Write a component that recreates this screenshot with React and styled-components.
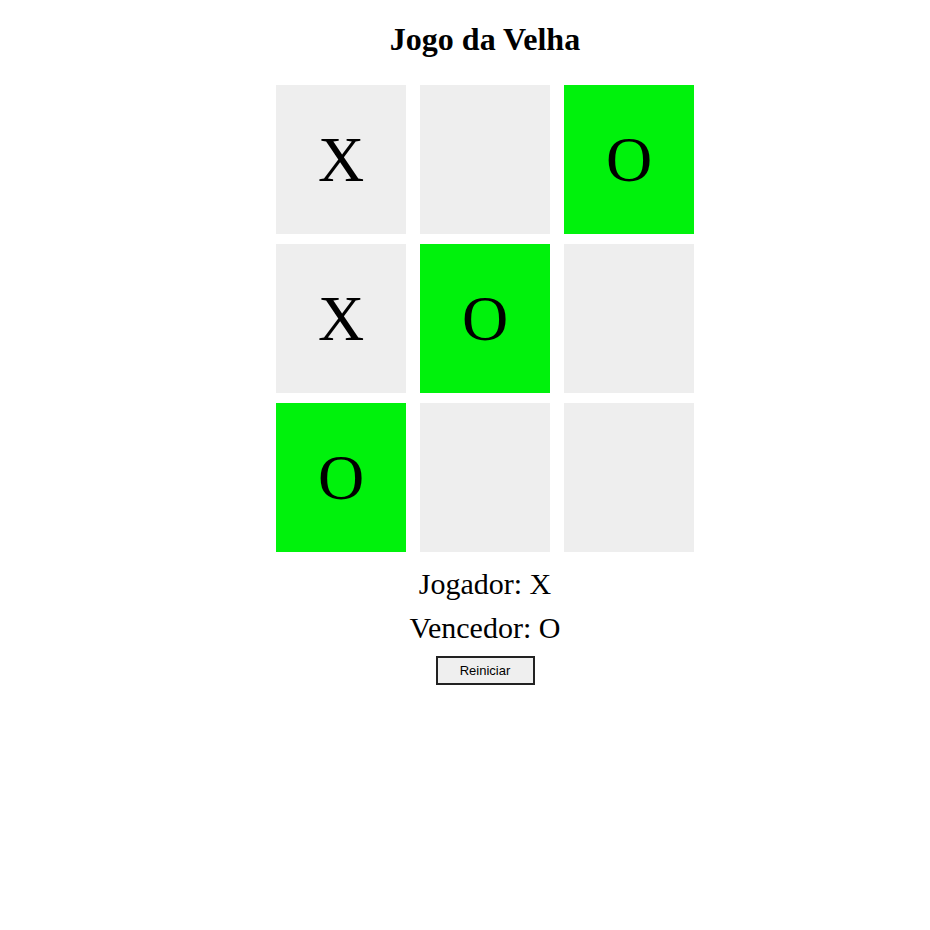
import React, { useState } from 'react'
import styled, { createGlobalStyle } from 'styled-components'

const GlobalStyle = createGlobalStyle`
  body {
    margin: 0;
    background: #ffffff;
    font-family: 'Liberation Serif', 'Times New Roman', serif;
    color: #000;
  }
`

const initialBoard = ['X', null, 'O', 'X', 'O', null, 'O', null, null]
const winningLine = [2, 4, 6]

const Page = styled.div`
  display: flex;
  flex-direction: column;
  align-items: center;
  padding-left: 40px;
`

const Title = styled.h1`
  font-size: 32px;
  font-weight: bold;
  margin: 21px 0 27px;
  line-height: 37px;
`

const Board = styled.div`
  display: grid;
  grid-template-columns: repeat(3, 130px);
  grid-auto-rows: 149px;
  gap: 10px 14px;
  margin-bottom: 16px;
`

const Cell = styled.div`
  display: flex;
  align-items: center;
  justify-content: center;
  background: ${({ highlight }) => (highlight ? '#00f20c' : '#eeeeee')};
  font-size: 64px;
  cursor: pointer;
`

const Status = styled.div`
  font-size: 30px;
  line-height: 32px;
  margin-bottom: 12px;
`

const ResetButton = styled.button`
  width: 99px;
  height: 29px;
  font-family: 'Liberation Sans', Arial, sans-serif;
  font-size: 13px;
  background: #efefef;
  border: 2px solid #222;
  padding: 0;
  cursor: pointer;
`

const App = () => {
  const [board, setBoard] = useState(initialBoard)

  return (
    <Page>
      <GlobalStyle />
      <Title>Jogo da Velha</Title>
      <Board>
        {board.map((value, i) => (
          <Cell key={i} highlight={winningLine.includes(i)}>
            {value}
          </Cell>
        ))}
      </Board>
      <Status>Jogador: X</Status>
      <Status>Vencedor: O</Status>
      <ResetButton onClick={() => setBoard(Array(9).fill(null))}>
        Reiniciar
      </ResetButton>
    </Page>
  )
}

export default App
